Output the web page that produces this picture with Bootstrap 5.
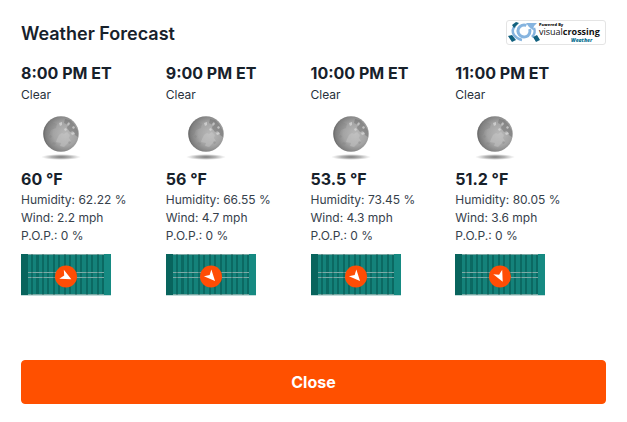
<!DOCTYPE html>
<html lang="en">
<head>
<meta charset="utf-8">
<meta name="viewport" content="width=device-width, initial-scale=1">
<title>Weather Forecast</title>
<link href="https://cdn.jsdelivr.net/npm/bootstrap@5.3.0/dist/css/bootstrap.min.css" rel="stylesheet">
<style>
  body { font-family: Inter, "Liberation Sans", sans-serif; color: #17212b; background: #fff; }
  .forecast { padding: 20px 21px; }
  .title { font-size: 18px; line-height: 28px; font-weight: 600; }
  .provider { width: 100px; height: 25px; border: 1px solid #e4e4e4; border-radius: 3px; }
  .hours { display: grid; grid-template-columns: repeat(4, 1fr); margin: 14px 6px 0 0; }
  .reading { font-size: 16px; line-height: 22px; font-weight: 700; }
  .details { font-size: 12px; line-height: 18px; color: #36414c; padding-top: 1px; }
  .sky { font-size: 12px; line-height: 22px; color: #27313c; }
  .moon { width: 80px; height: 62px; }
  .box { width: 90px; height: 42px; margin-top: 9px; }
  .btn-close-panel { --bs-btn-color: #fff; --bs-btn-bg: #ff5000; --bs-btn-border-color: #ff5000; --bs-btn-hover-color: #fff; --bs-btn-hover-bg: #e64800; --bs-btn-hover-border-color: #e64800; --bs-btn-border-radius: 4px; --bs-btn-font-size: 16px; --bs-btn-font-weight: 700; height: 44px; margin-top: 64px; }
</style>
<script defer src="https://cdn.jsdelivr.net/npm/bootstrap@5.3.0/dist/js/bootstrap.bundle.min.js"></script>
</head>
<body>
<svg width="0" height="0" class="position-absolute" aria-hidden="true">
  <defs>
    <radialGradient id="globe" cx=".62" cy=".5" r=".66"><stop offset="0" stop-color="#b8b8b8"/><stop offset=".5" stop-color="#a4a4a4"/><stop offset=".85" stop-color="#7c7c7c"/><stop offset="1" stop-color="#505050"/></radialGradient>
    <radialGradient id="shade"><stop offset="0" stop-color="#555" stop-opacity=".8"/><stop offset=".5" stop-color="#777" stop-opacity=".55"/><stop offset="1" stop-color="#999" stop-opacity="0"/></radialGradient>
    <filter id="soft" x="-20%" y="-20%" width="140%" height="140%"><feGaussianBlur stdDeviation=".6"/></filter>
    <clipPath id="disc"><circle cx="40" cy="30" r="17.8"/></clipPath>
    <symbol id="moon" viewBox="0 2 80 62">
      <ellipse cx="40" cy="53" rx="20" ry="3" fill="url(#shade)"/>
      <circle cx="40" cy="30" r="17.8" fill="url(#globe)"/>
      <g clip-path="url(#disc)"><g filter="url(#soft)">
        <path d="M44 15l5 1 4 4 4 7v6l-3-2-2-4-3 1-3-4 1-3-4-2z" fill="#6d6d6d" opacity=".5"/>
        <path d="M26 23l5-5 5 2-1 4-5 2-2 5-3-1z" fill="#808080" opacity=".35"/>
        <path d="M38 31l3-2 2 1 3-2 3 3-1 3 2 3-3 2-4 4-4-1 1-3-5-1 1-3z" fill="#cecece" opacity=".4"/>
        <path d="M38 19l3-1v3l-2 1zM46 20l2-2 1 2-2 2zM52 22l2 1-1 2-2-1zM50 29l3-1 1 2-3 1zM43 25l2-1 1 2-2 1z" fill="#dedede" opacity=".65"/>
        <path d="M32 38l3 1-1 2-3-1zM47 38l2-1 1 2-2 1zM29 31l2 1-1 2-2-1z" fill="#858585" opacity=".4"/>
      </g></g>
    </symbol>
    <symbol id="container" viewBox="0 0 90 42">
      <path fill="#14827a" d="M0 0h90v41H0z"/>
      <path fill="#08645d" d="M0 0h7v41H0z"/>
      <path fill="#168a82" d="M83 0h7v41h-7z"/>
      <path fill="#0b6962" d="M10 1h2v40h-2zM15 1h3v40h-3zM21 1h2v40h-2zM26 1h2v40h-2zM32 1h2v40h-2zM37 1h2v40h-2zM43 1h2v40h-2zM48 1h2v40h-2zM54 1h2v40h-2zM59 1h2v40h-2zM65 1h2v40h-2zM70 1h2v40h-2zM76 1h2v40h-2zM81 1h2v40h-2z"/>
      <g fill="none" stroke-width="1">
        <path stroke="#7ba9a5" d="M7 .5h76M7 18.500h76M7 23.500h76M7 40.500h76"/>
        <path stroke="#568a85" stroke-dasharray="2 9" d="M10 .5h73M10 18.500h73M10 23.500h73M10 40.500h73"/>
        <path stroke="#a8cfcc" opacity=".7" d="M0 41.500h90"/>
      </g>
      <circle cx="45" cy="22.500" r="11" fill="#ff4d05"/>
    </symbol>
    <path id="arrow" fill="#fff" d="M6 0L-5-5-2 0-5 5z"/>
  </defs>
</svg>
<main class="forecast">
  <header class="d-flex justify-content-between align-items-start">
    <h1 class="title mb-0">Weather Forecast</h1>
    <svg class="provider" viewBox="0 0 98 23" role="img" aria-label="Powered by Visual Crossing Weather">
      <path fill="none" stroke="#86b4df" stroke-width="2.500" d="M8 5Q4 9 7 14q3 4 8 5M25 16q4-4 2-9"/>
      <circle cx="17" cy="10" r="6" fill="none" stroke="#86b4df" stroke-width="3" stroke-dasharray="32 6" transform="rotate(-20 17 10)"/>
      <path fill="#86b4df" d="M19 2h11l-3 3-1 4-4-3z"/>
      <path fill="#12617f" d="M5 4l4-3 3 1-5 5zM1 15l4-1 4 5-4 2zM26 16l4-2 3 5-4 2z"/>
      <g font-family="Open Sans, sans-serif" fill="#111">
        <text x="32" y="5" font-size="4" font-weight="800">Powered By</text>
        <text x="32" y="14" font-size="9">visual<tspan font-weight="700">crossing</tspan></text>
        <text x="64" y="21" font-size="5" font-weight="800" font-style="italic" fill="#087091">Weather</text>
      </g>
    </svg>
  </header>
  <div class="hours">
    <section>
      <h2 class="reading mb-0">8:00 PM ET</h2><p class="sky mb-0">Clear</p>
      <svg class="moon d-block" aria-hidden="true"><use href="#moon"/></svg>
      <p class="reading mb-0">60 °F</p>
      <div class="details"><div>Humidity: 62.22 %</div><div>Wind: 2.2 mph</div><div>P.O.P.: 0 %</div></div>
      <svg class="box d-block" viewBox="0 0 90 42" role="img" aria-label="Wind direction"><use href="#container"/><use href="#arrow" transform="translate(45 22.500) rotate(27)"/></svg>
    </section>
    <section>
      <h2 class="reading mb-0">9:00 PM ET</h2><p class="sky mb-0">Clear</p>
      <svg class="moon d-block" aria-hidden="true"><use href="#moon"/></svg>
      <p class="reading mb-0">56 °F</p>
      <div class="details"><div>Humidity: 66.55 %</div><div>Wind: 4.7 mph</div><div>P.O.P.: 0 %</div></div>
      <svg class="box d-block" viewBox="0 0 90 42" role="img" aria-label="Wind direction"><use href="#container"/><use href="#arrow" transform="translate(45 22.500) rotate(48)"/></svg>
    </section>
    <section>
      <h2 class="reading mb-0">10:00 PM ET</h2><p class="sky mb-0">Clear</p>
      <svg class="moon d-block" aria-hidden="true"><use href="#moon"/></svg>
      <p class="reading mb-0">53.5 °F</p>
      <div class="details"><div>Humidity: 73.45 %</div><div>Wind: 4.3 mph</div><div>P.O.P.: 0 %</div></div>
      <svg class="box d-block" viewBox="0 0 90 42" role="img" aria-label="Wind direction"><use href="#container"/><use href="#arrow" transform="translate(45 22.500) rotate(48)"/></svg>
    </section>
    <section>
      <h2 class="reading mb-0">11:00 PM ET</h2><p class="sky mb-0">Clear</p>
      <svg class="moon d-block" aria-hidden="true"><use href="#moon"/></svg>
      <p class="reading mb-0">51.2 °F</p>
      <div class="details"><div>Humidity: 80.05 %</div><div>Wind: 3.6 mph</div><div>P.O.P.: 0 %</div></div>
      <svg class="box d-block" viewBox="0 0 90 42" role="img" aria-label="Wind direction"><use href="#container"/><use href="#arrow" transform="translate(45 22.500) rotate(63)"/></svg>
    </section>
  </div>
  <button type="button" class="btn btn-close-panel w-100">Close</button>
</main>
</body>
</html>
